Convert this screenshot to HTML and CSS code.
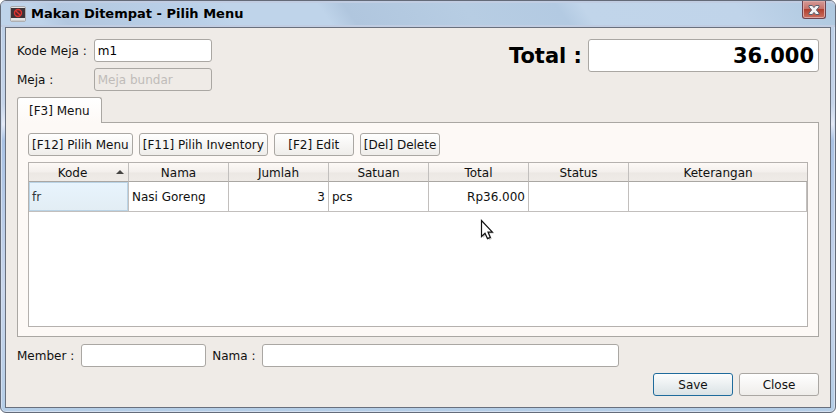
FILE: index.html
```html
<!DOCTYPE html>
<html lang="id">
<head>
<meta charset="utf-8">
<meta name="viewport" content="width=device-width, initial-scale=1">
<title>Makan Ditempat - Pilih Menu</title>
<link rel="stylesheet" href="styles.css">
</head>
<body>
<div class="window">
  <header class="titlebar">
    <svg class="app-icon" width="16" height="16" viewBox="0 0 16 16" aria-hidden="true">
      <rect x="0.5" y="0.5" width="15" height="15" rx="1.5" fill="#e4e4e4" stroke="#a9a9ad"/>
      <rect x="1" y="2" width="14" height="10" fill="#3d3338"/>
      <path d="M2 15h12" stroke="#b5b5b5"/>
      <circle cx="8" cy="7" r="3.5" fill="#5a2328" stroke="#dc3530" stroke-width="1.4"/>
      <path d="M5.6 4.8l4.8 4.4" stroke="#dc3530" stroke-width="1.4"/>
    </svg>
    <h1 class="title">Makan Ditempat - Pilih Menu</h1>
    <button class="window-close" type="button" aria-label="Close window">
      <svg width="12" height="10" viewBox="0 0 12 10" aria-hidden="true">
        <path d="M1 0.5H4.3L6 2.6L7.7 0.5H11V2L8.4 5L11 8V9.5H7.7L6 7.4L4.3 9.5H1V8L3.6 5L1 2Z" fill="#f4f4f4" stroke="#59606e"/>
      </svg>
    </button>
  </header>
  <main class="client">
    <div class="top">
      <div class="fields">
        <label class="label" for="kode">Kode Meja :</label>
        <input id="kode" class="field" type="text" value="m1">
        <label class="label" for="meja">Meja :</label>
        <input id="meja" class="field" type="text" value="Meja bundar" disabled>
      </div>
      <div class="total">
        <label for="total">Total :</label>
        <input id="total" class="field total-field" type="text" value="36.000" readonly>
      </div>
    </div>
    <div class="tabs" role="tablist">
      <button class="tab" type="button" role="tab" aria-selected="true">[F3] Menu</button>
    </div>
    <section class="pane" role="tabpanel">
      <div class="toolbar">
        <button class="btn" type="button">[F12] Pilih Menu</button>
        <button class="btn" type="button">[F11] Pilih Inventory</button>
        <button class="btn" type="button">[F2] Edit</button>
        <button class="btn" type="button">[Del] Delete</button>
      </div>
      <div class="table-view">
        <table class="items">
          <thead>
            <tr>
              <th class="sorted" aria-sort="ascending">Kode<svg class="sort" width="8" height="4" viewBox="0 0 8 4" aria-hidden="true"><path d="M0 4L4 0L8 4Z" fill="#464442"/></svg></th>
              <th>Nama</th>
              <th>Jumlah</th>
              <th>Satuan</th>
              <th>Total</th>
              <th>Status</th>
              <th class="wide">Keterangan</th>
            </tr>
          </thead>
          <tbody>
            <tr>
              <td class="selected">fr</td>
              <td>Nasi Goreng</td>
              <td class="num">3</td>
              <td>pcs</td>
              <td class="num">Rp36.000</td>
              <td></td>
              <td></td>
            </tr>
          </tbody>
        </table>
      </div>
    </section>
    <div class="member">
      <label class="label" for="member">Member :</label>
      <input id="member" class="field member-field" type="text">
      <label class="label" for="nama">Nama :</label>
      <input id="nama" class="field nama-field" type="text">
    </div>
    <footer class="actions">
      <button class="btn primary" type="button">Save</button>
      <button class="btn" type="button">Close</button>
    </footer>
  </main>
  <svg class="pointer" width="14" height="22" viewBox="0 0 14 22" aria-hidden="true">
    <path d="M3 3.5V19L6.5 15.7L9.2 21.2L12 19.8L9.6 14.5H14Z" fill="#000" opacity=".2"/>
    <path d="M1.5 1.5V17.5L5 14.2L7.5 19.6L10.3 18.4L8 13.1H12.4Z" fill="#fff" stroke="#111" stroke-width="1.2"/>
  </svg>
</div>
</body>
</html>
```
FILE: styles.css
```css
* {
  box-sizing: border-box;
}

body {
  margin: 0;
  background: #fff;
  color: #111;
  font: 12px/14px "DejaVu Sans", sans-serif;
}

input,
button {
  font: inherit;
  color: inherit;
}

.window {
  position: relative;
  display: flex;
  flex-direction: column;
  min-height: 100vh;
  padding: 0 4px 4px;
  border: 1px solid #646b79;
  border-radius: 6px;
  background: linear-gradient(#b9cde5, #c6d5ea 25%, #e4eaf7 30%, #a9c2e4 34%, #c9d6ec 70%, #b4cde6);
  box-shadow: inset 0 0 0 1px #d3dff0;
}

.titlebar {
  display: flex;
  align-items: center;
  height: 26px;
  margin: 0 -4px;
  padding: 0 9px;
  border-radius: 5px 5px 0 0;
  border-top: 2px solid #c1cde2;
  border-bottom: 2px solid #c1cde2;
  background: linear-gradient(55deg, #bed3ea 0 5%, #b3c8e0 8%, #bad0e8 24%, #bfd4ea 28% 39%, #b0c6de 42%, #b7cde3 56%, #b3cae2 67%, #c1d5ea 70%, #c0d4ea 88%, #aec8df);
}

.title {
  flex: 1;
  margin: 0 0 0 5px;
  color: #000;
  font-size: 13px;
  line-height: 16px;
}

.window-close {
  display: flex;
  align-items: center;
  justify-content: center;
  align-self: flex-start;
  width: 24px;
  height: 18px;
  margin-top: -2px;
  padding: 0;
  border: 1px solid #6d4450;
  border-top: 0;
  border-radius: 0 0 3px 3px;
  background: linear-gradient(#d59a96, #c6736b 45%, #b0402f 50%, #cc7060);
  box-shadow: inset 0 0 0 1px #dda8a4;
}

.client {
  display: flex;
  flex: 1;
  flex-direction: column;
  padding: 11px;
  border: 1px solid #69707d;
  background: #efebe7;
}

.top {
  display: flex;
  justify-content: space-between;
  align-items: flex-start;
}

.fields {
  display: grid;
  grid-template-columns: auto 118px;
  align-items: center;
  gap: 6px;
}

.label {
  padding-right: 1px;
}

.field {
  width: 100%;
  min-width: 0;
  height: 23px;
  padding: 0 3px;
  border: 1px solid #aaa7a3;
  border-radius: 3px;
  background: #fff;
  color: #000;
}

.field:disabled {
  background: #efebe7;
  color: #c0bcb9;
}

.total {
  display: flex;
  align-items: center;
  gap: 6px;
  color: #000;
  font-size: 21px;
  font-weight: bold;
  line-height: 24px;
  white-space: nowrap;
}

.total-field {
  width: 231px;
  height: 33px;
  padding: 0 4px;
  text-align: right;
}

.tabs {
  display: flex;
  margin-top: 6px;
}

.tab {
  z-index: 1;
  height: 26px;
  margin-bottom: -1px;
  padding: 0 11px;
  border: 1px solid #aaa7a3;
  border-bottom: 0;
  border-radius: 3px 3px 0 0;
  background: linear-gradient(#fff, #fdf9f6);
}

.pane {
  display: flex;
  flex: 1;
  flex-direction: column;
  gap: 6px;
  padding: 10px 10px 9px;
  border: 1px solid #aaa7a3;
  background: #fdf9f6;
}

.toolbar {
  display: flex;
  gap: 6px;
}

.btn {
  min-width: 80px;
  height: 23px;
  padding: 0 3px;
  border: 1px solid #aaa7a3;
  border-radius: 3px;
  background: linear-gradient(#fff, #efedea);
  white-space: nowrap;
}

.primary {
  border-color: #1f6b9c;
  background: linear-gradient(#fcfdfd, #dae2e5);
}

.table-view {
  flex: 1;
  border: 1px solid #b5b1ae;
  background: #fff;
}

.items {
  width: 100%;
  table-layout: fixed;
  border-spacing: 0;
}

.items th,
.items td {
  width: 100px;
  border-right: 1px solid #c2bfbd;
  border-bottom: 1px solid #c2bfbd;
}

.items th {
  height: 19px;
  padding: 1px 0 0;
  border-bottom-color: #aaa7a3;
  background: linear-gradient(#fdf9f6, #f3efec 50%, #ece8e4 55%, #efebe7);
  font-weight: normal;
}

.items .wide {
  width: auto;
  border-right: 0;
}

.items .sorted {
  position: relative;
  padding-right: 12px;
}

.sort {
  position: absolute;
  top: 7px;
  right: 4px;
}

.items td {
  height: 30px;
  padding: 0 3px;
}

.items .num {
  text-align: right;
}

.items .selected {
  background: linear-gradient(#e8f4fd, #e2edf4);
  box-shadow: inset 0 0 0 1px #bad3e5;
  color: #31363b;
}

.member {
  display: flex;
  align-items: center;
  gap: 6px;
  margin-top: 7px;
}

.member-field {
  width: 125px;
}

.nama-field {
  width: 357px;
}

.actions {
  display: flex;
  justify-content: flex-end;
  gap: 6px;
  margin-top: 6px;
}

.pointer {
  position: absolute;
  top: 218px;
  left: 479px;
}
```
